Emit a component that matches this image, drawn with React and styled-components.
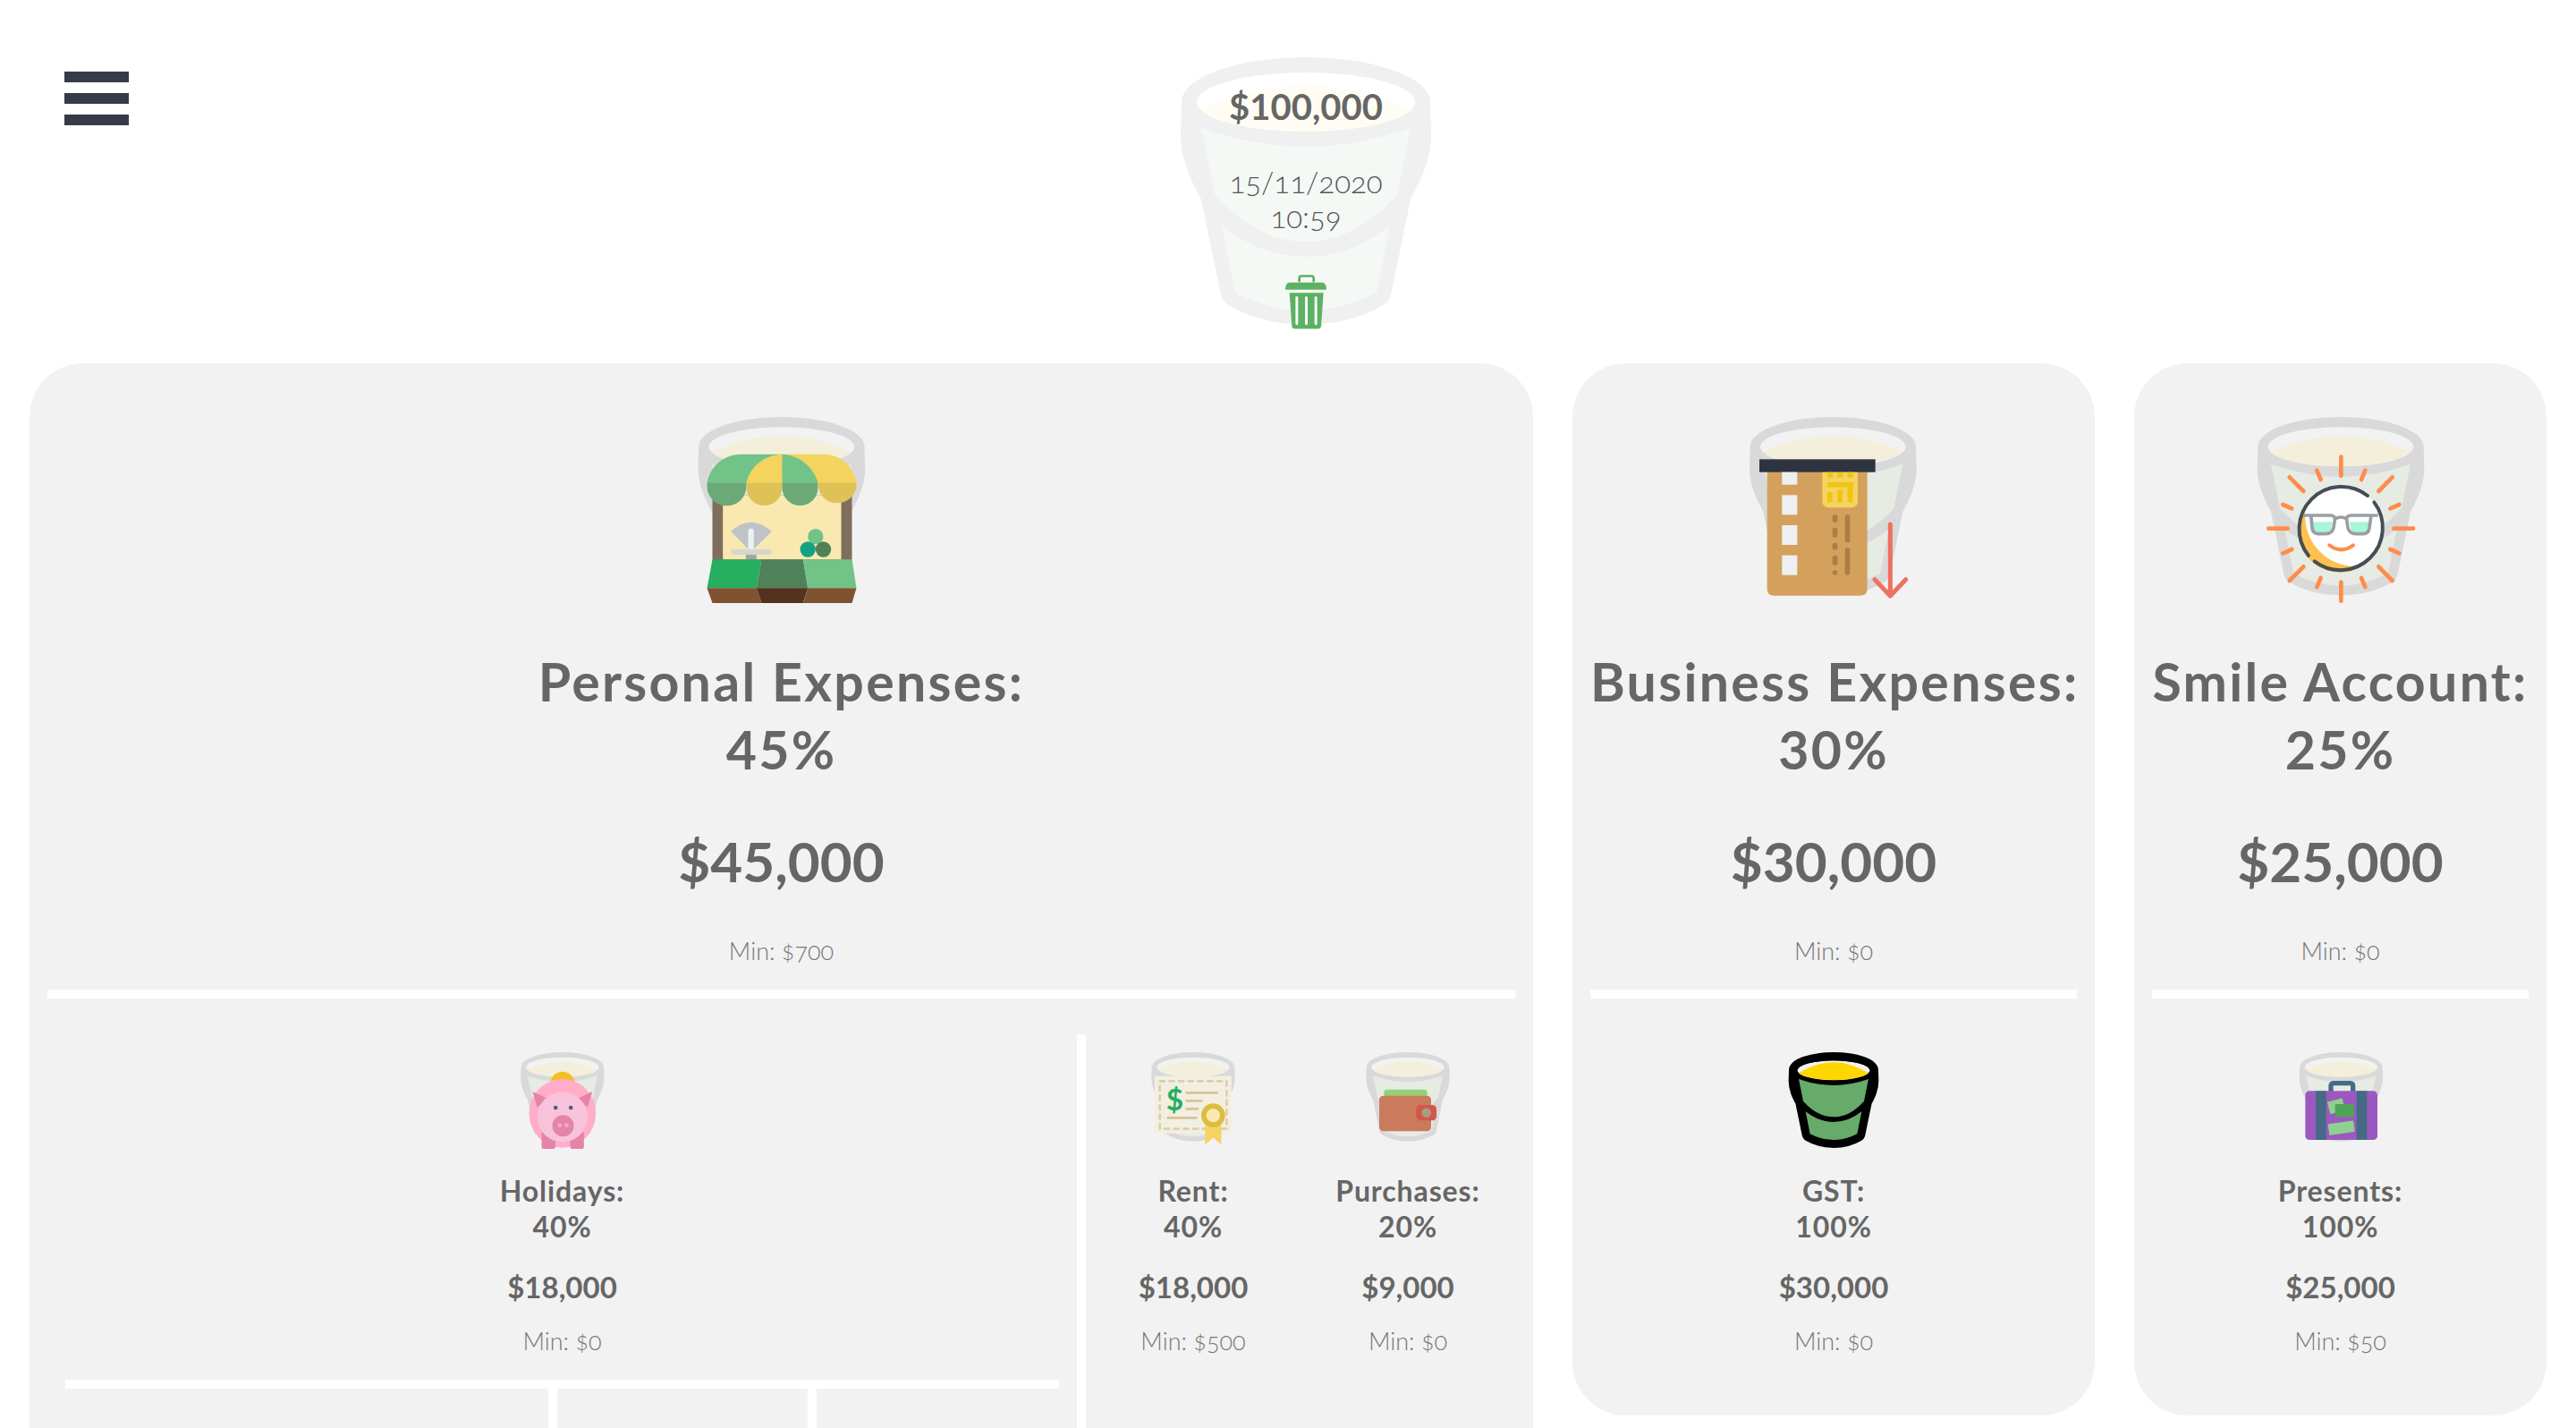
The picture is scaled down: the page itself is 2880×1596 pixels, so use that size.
import React from "react";
import styled, { createGlobalStyle } from "styled-components";

const GlobalStyle = createGlobalStyle`
  html, body {
    margin: 0;
    height: 1596px;
    overflow: hidden;
    background: #fff;
    font-family: "Lato", "Noto Sans", sans-serif;
    color: #666;
  }
`;

const Header = styled.header`
  display: flex;
  align-items: flex-start;
  height: 342px;
  padding: 64px 0 0 72px;
`;

const Burger = styled.button`
  display: flex;
  flex-direction: column;
  gap: 12px;
  width: 72px;
  margin-top: 16px;
  padding: 0;
  border: 0;
  background: none;
  span {
    height: 12px;
    background: #373b48;
  }
`;

const Total = styled.div`
  position: relative;
  width: 280px;
  height: 304px;
  margin-left: 1176px;
  > svg {
    display: block;
  }
`;

const TotalText = styled.div`
  position: absolute;
  left: 0;
  right: 0;
  text-align: center;
  top: ${(p) => p.$top}px;
  font-size: ${(p) => p.$size}px;
  font-weight: ${(p) => p.$weight};
  line-height: 39px;
  color: ${(p) => (p.$old ? "#555" : "#666")};
  font-feature-settings: ${(p) => (p.$old ? '"onum"' : "normal")};
`;

const TrashButton = styled.button`
  position: absolute;
  left: 117px;
  top: 243px;
  width: 46px;
  height: 61px;
  padding: 0;
  border: 0;
  background: none;
  svg {
    display: block;
  }
`;

const Board = styled.main`
  display: grid;
  grid-template-columns: 1681px 584px 461px;
  gap: 44px;
  align-items: start;
  padding-left: 33px;
`;

const Card = styled.section`
  background: #f2f2f2;
  border-radius: 60px;
  padding: 0 20px ${(p) => (p.$open ? 300 : 67)}px;
`;

const Block = styled.div`
  padding-top: 34px;
  text-align: center;
  svg {
    display: block;
    margin: 0 auto;
  }
`;

const Title = styled.div`
  margin-top: ${(p) => (p.$big ? 24 : 11)}px;
  font-size: ${(p) => (p.$big ? 59 : 32)}px;
  line-height: ${(p) => (p.$big ? 76 : 40)}px;
  font-weight: 700;
  letter-spacing: ${(p) => (p.$big ? 2.3 : 0.9)}px;
  white-space: nowrap;
`;

const Money = styled.div`
  margin-top: ${(p) => (p.$big ? 46 : 27)}px;
  font-size: ${(p) => (p.$big ? 62 : 33)}px;
  line-height: ${(p) => (p.$big ? 80 : 40)}px;
  font-weight: 700;
`;

const Min = styled.div`
  margin-top: ${(p) => (p.$big ? 45 : 25)}px;
  font-size: 27px;
  line-height: 32px;
  font-weight: 300;
  color: #777;
  font-feature-settings: "onum";
`;

const Rule = styled.hr`
  height: 10px;
  margin: 27px 0 0;
  border: 0;
  background: #fff;
`;

const Split = styled.div`
  display: flex;
  align-items: flex-start;
`;

const Wide = styled.div`
  flex: 1;
  padding: 0 20px;
`;

const Side = styled.div`
  display: grid;
  grid-template-columns: 240px 240px;
  width: 480px;
  margin-top: 40px;
  border-left: 10px solid #fff;
  height: 600px;
  > div {
    padding-top: 0;
    margin-top: -6px;
  }
`;

const Children = styled.div`
  display: grid;
  grid-template-columns: 540px 290px 281px;
  height: 120px;
  div {
    border-left: 10px solid #fff;
  }
  div:first-child {
    border-left: 0;
  }
`;

const SILHOUETTE =
  "M1 50 A139 50 0 0 1 279 50 L280 86 C280 115 268 138 257 159 L235 266 Q233 273 228 276 Q190 299 140 299 Q90 299 52 276 Q47 273 45 266 L23 159 C12 138 0 115 0 86 Z";
const HOLE = "M18 50 A122 33 0 0 0 262 50 A122 33 0 0 0 18 50 Z";

const greyBucket = { rim: "#d9d9d9", pane: "#e6ebe4", liquid: "#f4efdb" };
const paleBucket = { rim: "#f0f0f0", pane: "#f5f9f6", liquid: "#fffdf3" };

function Bucket({ x = 0, y = 0, scale = 1, colors = greyBucket, outlined }) {
  return (
    <g transform={`translate(${x} ${y}) scale(${scale})`}>
      {outlined && (
        <>
          <path d={SILHOUETTE} fill="#000" stroke="#000" strokeWidth="22" strokeLinejoin="round" />
          <path d={HOLE} fill="#f2f2f2" />
        </>
      )}
      <path d={SILHOUETTE + " " + HOLE} fill={colors.rim} fillRule="evenodd" />
      <path d="M23 79 Q140 121 257 79 L242 153 Q195 206 140 206 Q85 206 38 153 Z" fill={colors.pane} />
      <path d="M46 188 Q90 223 140 223 Q190 223 234 188 L219 263 Q180 283 140 283 Q100 283 61 263 Z" fill={colors.pane} />
      <path d={`M23 59 Q140 ${outlined ? -14 : 4} 257 59 A122 33 0 0 1 23 59 Z`} fill={colors.liquid} />
    </g>
  );
}

function BigIcon({ minX, children }) {
  return (
    <svg width="260" height="260" viewBox={`${minX} 0 780 780`}>
      {children}
    </svg>
  );
}

function SmallIcon({ minX, children }) {
  return (
    <svg width="180" height="150" viewBox={`${minX} 0 540 450`}>
      {children}
    </svg>
  );
}

const MarketIcon = () => (
  <BigIcon minX={10.5}>
    <Bucket x={120} y={78} scale={2} />
    <rect x="168" y="340" width="468" height="220" fill="#7f6e5d" />
    <rect x="203" y="340" width="397" height="216" fill="#f9e9b0" />
    <path d="M150 300 C160 240 210 203 265 203 H402 V300 Z" fill="#72c387" />
    <path d="M282 300 C290 250 340 205 402 203 V300 Z" fill="#f4d35e" />
    <path d="M402 203 H540 C600 203 645 250 651 300 H402 Z" fill="#f4d35e" />
    <path d="M402 203 C460 205 510 250 522 300 H402 Z" fill="#72c387" />
    <path d="M150 299 H282 V310 A66 66 0 0 1 150 310 Z" fill="#6baa78" />
    <path d="M282 299 H402 V315 A60 60 0 0 1 282 315 Z" fill="#dfc257" />
    <path d="M402 299 H522 V315 A60 60 0 0 1 402 315 Z" fill="#6baa78" />
    <path d="M522 299 H651 V310 A65 65 0 0 1 522 310 Z" fill="#dfc257" />
    <path d="M230 462 Q297 400 367 462 L297 530 Z" fill="#bdc3c7" />
    <rect x="288" y="452" width="19" height="78" rx="9" fill="#ecf0f1" />
    <rect x="280" y="538" width="36" height="18" fill="#a5a5a0" />
    <rect x="230" y="521" width="137" height="19" rx="9" fill="#d5d6d0" />
    <circle cx="514" cy="479" r="26" fill="#72c387" />
    <circle cx="488" cy="522" r="26" fill="#16a085" />
    <circle cx="540" cy="522" r="26" fill="#4f8259" />
    <path d="M168 556 H333 L316 652 H150 Z" fill="#27ae60" />
    <path d="M333 556 H472 L488 652 H316 Z" fill="#4f8259" />
    <path d="M472 556 H636 L651 652 H488 Z" fill="#72c387" />
    <path d="M150 652 H316 L333 702 H168 Z" fill="#7f5330" />
    <path d="M316 652 H488 L472 702 H333 Z" fill="#54321f" />
    <path d="M488 652 H651 L636 702 H472 Z" fill="#7f5330" />
  </BigIcon>
);

const CardIcon = () => (
  <BigIcon minX={0}>
    <Bucket x={108} y={78} scale={2} />
    <path d="M167 246 H503 V655 Q503 677 481 677 H189 Q167 677 167 655 Z" fill="#d4a15c" />
    <rect x="141" y="220" width="389" height="43" fill="#2d3340" />
    {[263, 340, 441, 542].map((y, i) => (
      <rect key={y} x="217" y={y} width="51" height={i === 0 ? 42 : 66} fill="#ecf0f1" />
    ))}
    <path d="M352 263 H471 V360 Q471 382 449 382 H374 Q352 382 352 360 Z" fill="#f4d35e" />
    <g fill="#f1c40f">
      <rect x="369" y="263" width="18" height="18" />
      <rect x="403" y="263" width="18" height="18" />
      <rect x="437" y="263" width="18" height="18" />
      <rect x="369" y="297" width="86" height="16" />
      <rect x="369" y="330" width="17" height="34" />
      <rect x="403" y="322" width="17" height="42" />
      <rect x="437" y="297" width="17" height="67" />
    </g>
    <g fill="#ad7d46">
      <rect x="386" y="406" width="17" height="26" rx="8" />
      <rect x="386" y="449" width="17" height="33" rx="8" />
      <rect x="386" y="500" width="17" height="24" rx="8" />
      <rect x="386" y="542" width="17" height="33" rx="8" />
      <rect x="386" y="592" width="17" height="16" rx="8" />
      <rect x="428" y="406" width="17" height="93" rx="8" />
      <rect x="428" y="517" width="17" height="91" rx="8" />
    </g>
    <path d="M580 438 V678 M528 623 L580 678 L632 623" fill="none" stroke="#ed7161" strokeWidth="15" strokeLinecap="round" strokeLinejoin="round" />
  </BigIcon>
);

const RAYS = [
  [381, 212, 381, 275], [381, 632, 381, 695], [138, 452, 202, 452], [558, 452, 623, 452],
  [208, 280, 255, 327], [553, 280, 507, 327], [208, 627, 255, 580], [553, 627, 507, 580],
  [300, 257, 313, 288], [462, 257, 449, 288], [186, 372, 216, 385], [576, 372, 546, 385],
  [186, 535, 216, 522], [576, 535, 546, 522], [300, 648, 313, 618], [462, 648, 449, 618],
];

const SunIcon = () => (
  <BigIcon minX={-10}>
    <Bucket x={100} y={78} scale={2} />
    <g stroke="#ff8c4b" strokeWidth="14" strokeLinecap="round">
      {RAYS.map(([x1, y1, x2, y2]) => (
        <line key={`${x1}-${y1}`} x1={x1} y1={y1} x2={x2} y2={y2} />
      ))}
    </g>
    <circle cx="381" cy="452" r="140" fill="#fff" />
    <path d="M262 378 A140 140 0 0 0 450 578 C340 590 245 500 262 378 Z" fill="#ffc04d" />
    <path d="M470 342 A142 142 0 0 0 272 543 M292 562 A142 142 0 0 0 492 364" fill="none" stroke="#474d55" strokeWidth="12" strokeLinecap="round" />
    <path d="M286 430 H352 L348 452 Q344 468 330 468 H306 Q290 468 288 452 Z" fill="#a8f5d8" />
    <path d="M410 430 H474 L472 452 Q470 468 454 468 H432 Q416 468 414 452 Z" fill="#a8f5d8" />
    <path d="M255 408 H345 Q362 408 360 424 L356 450 Q350 470 330 470 H306 Q286 470 284 450 L280 408 M505 408 H415 Q398 408 400 424 L404 450 Q410 470 430 470 H454 Q474 470 476 450 L482 408 M360 420 Q380 408 400 420" fill="none" stroke="#9a9ea2" strokeWidth="11" />
    <path d="M342 508 Q382 538 422 508" fill="none" stroke="#ff8c4b" strokeWidth="12" strokeLinecap="round" />
  </BigIcon>
);

const PigIcon = () => (
  <SmallIcon minX={-4.5}>
    <Bucket x={125} y={78} />
    <circle cx="265" cy="183" r="40" fill="#f5be1f" />
    <ellipse cx="265" cy="283" rx="112" ry="115" fill="#ffadc9" />
    <path d="M165 210 L218 235 L180 262 Z M365 210 L312 235 L350 262 Z" fill="#e384a8" />
    <rect x="195" y="345" width="46" height="57" rx="6" fill="#e384a8" />
    <rect x="291" y="345" width="46" height="57" rx="6" fill="#e384a8" />
    <circle cx="265" cy="295" r="84" fill="#f8c3da" />
    <circle cx="242" cy="264" r="7" fill="#4a5a80" />
    <circle cx="293" cy="264" r="7" fill="#4a5a80" />
    <circle cx="267" cy="325" r="36" fill="#e384a8" />
    <circle cx="256" cy="323" r="7" fill="#f8a8c6" />
    <circle cx="279" cy="323" r="7" fill="#f8a8c6" />
  </SmallIcon>
);

const DeedIcon = () => (
  <SmallIcon minX={-48}>
    <Bucket x={82} y={78} />
    <rect x="93" y="158" width="257" height="192" fill="#f3efe0" />
    <rect x="110" y="175" width="224" height="160" fill="none" stroke="#d9cfae" strokeWidth="8" strokeDasharray="16 16" strokeLinecap="round" />
    <text x="160" y="272" textAnchor="middle" fontFamily="Lato, sans-serif" fontWeight="700" fontSize="100" fill="#27ae60">$</text>
    <path d="M200 214 H302 M200 241 H250 M200 268 H237 M137 298 H232" stroke="#d6c39c" strokeWidth="8" strokeLinecap="round" />
    <path d="M262 310 H316 V388 L289 364 L262 388 Z" fill="#f4d35e" />
    <circle cx="289" cy="290" r="40" fill="#dcbd3e" />
    <circle cx="289" cy="290" r="23" fill="#f9e9b0" />
  </SmallIcon>
);

const WalletIcon = () => (
  <SmallIcon minX={672}>
    <Bucket x={802} y={78} />
    <rect x="864" y="205" width="141" height="40" rx="8" fill="#9ccc75" stroke="#7ee07a" strokeWidth="4" />
    <rect x="846" y="224" width="174" height="119" rx="14" fill="#cc7a5c" />
    <rect x="970" y="255" width="68" height="52" rx="14" fill="#d2574a" />
    <circle cx="1004" cy="281" r="16" fill="#a89c85" />
  </SmallIcon>
);

const gstBucket = { rim: "#000", pane: "#66ab6a", liquid: "#ffd700" };

const GstIcon = () => (
  <SmallIcon minX={0}>
    <Bucket x={130} y={89} colors={gstBucket} outlined />
  </SmallIcon>
);

const CaseIcon = () => (
  <SmallIcon minX={-11}>
    <Bucket x={120} y={78} />
    <rect x="226" y="182" width="74" height="50" rx="8" fill="none" stroke="#456a85" strokeWidth="16" />
    <rect x="140" y="208" width="242" height="164" rx="14" fill="#9b59c0" />
    <rect x="175" y="208" width="35" height="164" fill="#456a85" />
    <rect x="312" y="208" width="35" height="164" fill="#456a85" />
    <rect x="218" y="238" width="52" height="42" rx="3" fill="#8ed18f" transform="rotate(-15 244 259)" />
    <rect x="240" y="252" width="64" height="43" rx="4" fill="#4ea455" />
    <rect x="218" y="313" width="86" height="38" rx="3" fill="#8ed18f" transform="rotate(-8 261 332)" />
  </SmallIcon>
);

const TrashIcon = () => (
  <svg width="46" height="61" viewBox="0 0 138 182">
    <path d="M47 24 V11 Q47 4 54 4 H88 Q95 4 95 11 V24" fill="none" stroke="#5cb262" strokeWidth="8" />
    <path d="M0 50 Q0 26 15 26 H123 Q138 26 138 50 Z" fill="#5cb262" />
    <path d="M14 60 H128 L120 172 Q119 181 110 181 H32 Q23 181 22 172 Z" fill="#5cb262" />
    <rect x="34" y="72" width="9" height="96" rx="4" fill="#f5f9f6" />
    <rect x="66" y="72" width="9" height="96" rx="4" fill="#f5f9f6" />
    <rect x="98" y="72" width="9" height="96" rx="4" fill="#f5f9f6" />
  </svg>
);

function Figures({ icon, name, pct, money, min, big }) {
  return (
    <Block>
      {icon}
      <Title $big={big}>
        {name}:
        <br />
        {pct}%
      </Title>
      <Money $big={big}>{money}</Money>
      <Min $big={big}>Min: {min}</Min>
    </Block>
  );
}

export default function App() {
  return (
    <>
      <GlobalStyle />
      <Header>
        <Burger aria-label="menu">
          <span />
          <span />
          <span />
        </Burger>
        <Total>
          <svg width="280" height="304" viewBox="0 0 280 304">
            <Bucket colors={paleBucket} />
          </svg>
          <TotalText $top={36} $size={40} $weight={700}>$100,000</TotalText>
          <TotalText $top={120} $size={33} $weight={300} $old>15/11/2020</TotalText>
          <TotalText $top={159} $size={33} $weight={300} $old>10:59</TotalText>
          <TrashButton aria-label="delete">
            <TrashIcon />
          </TrashButton>
        </Total>
      </Header>
      <Board>
        <Card $open>
          <Figures big icon={<MarketIcon />} name="Personal Expenses" pct={45} money="$45,000" min="$700" />
          <Rule />
          <Split>
            <Wide>
              <Figures icon={<PigIcon />} name="Holidays" pct={40} money="$18,000" min="$0" />
              <Rule />
              <Children>
                <div />
                <div />
                <div />
              </Children>
            </Wide>
            <Side>
              <Figures icon={<DeedIcon />} name="Rent" pct={40} money="$18,000" min="$500" />
              <Figures icon={<WalletIcon />} name="Purchases" pct={20} money="$9,000" min="$0" />
            </Side>
          </Split>
        </Card>
        <Card>
          <Figures big icon={<CardIcon />} name="Business Expenses" pct={30} money="$30,000" min="$0" />
          <Rule />
          <Figures icon={<GstIcon />} name="GST" pct={100} money="$30,000" min="$0" />
        </Card>
        <Card>
          <Figures big icon={<SunIcon />} name="Smile Account" pct={25} money="$25,000" min="$0" />
          <Rule />
          <Figures icon={<CaseIcon />} name="Presents" pct={100} money="$25,000" min="$50" />
        </Card>
      </Board>
    </>
  );
}
